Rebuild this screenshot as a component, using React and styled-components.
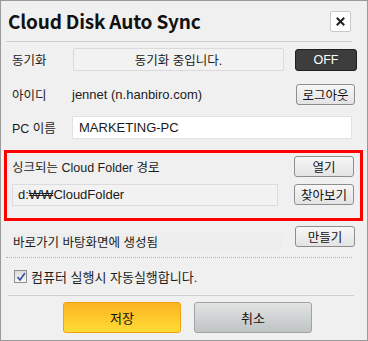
import React from "react";
import styled, { createGlobalStyle } from "styled-components";

const Global = createGlobalStyle`
  html, body { margin: 0; padding: 0; background: #f0f0f0; }
  * { box-sizing: border-box; }
`;

const FONT = `"Liberation Sans", "Noto Sans CJK KR", sans-serif`;

const Dialog = styled.div`
  width: 368px;
  height: 341px;
  border: 1px solid #9a9a9a;
  background: #f0f0f0;
  font-family: ${FONT};
  font-size: 12px;
  color: #1c1c1c;
  display: flex;
  flex-direction: column;
`;

const Header = styled.div`
  height: 40px;
  display: flex;
  align-items: center;
  padding: 0 16px 0 7px;
  justify-content: space-between;
`;

const Title = styled.h1`
  margin: 0;
  font-family: "Noto Sans CJK KR", "Liberation Sans", sans-serif;
  font-size: 19px;
  font-weight: 700;
  color: #111;
  letter-spacing: -0.2px;
  margin-top: -1px;
`;

const CloseBtn = styled.button`
  width: 21px;
  height: 21px;
  padding: 0;
  border: 1px solid #c8c8c8;
  border-radius: 2px;
  background: #fff;
  display: flex;
  align-items: center;
  justify-content: center;
`;

const Rule = styled.div`
  margin: ${(p) => p.$m || "0 15px 0 5px"};
  border-top: 1px ${(p) => (p.$dotted ? "dotted #b4b4b4" : "solid #cfcfcf")};
`;

const Row = styled.div`
  display: flex;
  align-items: ${(p) => p.$align || "center"};
  height: ${(p) => p.$h}px;
  margin-top: ${(p) => p.$mt}px;
  padding: 0 ${(p) => p.$pr}px 0 11px;
`;

const Label = styled.span`
  width: ${(p) => p.$w || 61}px;
  flex: none;
  font-size: 12.5px;
  white-space: nowrap;
`;

const Text = styled.span`
  flex: 1;
  font-size: 13px;
  color: #222;
`;

const StatusBox = styled.div`
  width: 211px;
  height: 23px;
  border: 1px solid #dadada;
  border-radius: 2px;
  background: #f2f2f2;
  display: flex;
  align-items: center;
  justify-content: center;
  font-size: 12.5px;
  color: #1a1a1a;
`;

const DarkBtn = styled.button`
  margin-left: auto;
  width: 62px;
  height: 22px;
  border: 1px solid #1e1e1e;
  border-radius: 3px;
  background: #3d3d3d;
  color: #fff;
  font-family: ${FONT};
  font-size: 12.5px;
  padding: 0;
`;

const GrayBtn = styled.button`
  margin-left: auto;
  width: ${(p) => p.$w || 60}px;
  height: 21px;
  flex: none;
  border: 1px solid #8e8e8e;
  border-radius: 3px;
  background: linear-gradient(#f7f7f7, #e3e3e3);
  color: #111;
  font-family: ${FONT};
  font-size: 12.5px;
  padding: 0;
`;

const Field = styled.div`
  width: ${(p) => p.$w}px;
  height: ${(p) => p.$h || 23}px;
  flex: none;
  border: 1px solid ${(p) => (p.$ro ? "#dcdcdc" : "#e2e2e2")};
  background: ${(p) => (p.$ro ? "#f2f2f2" : "#ffffff")};
  display: flex;
  align-items: center;
  padding-left: ${(p) => p.$pl || 6}px;
  font-size: 13px;
  color: #1a1a1a;
`;

const Highlight = styled.div`
  margin: 11px 0 0 3px;
  width: 359px;
  height: 71px;
  border: 3px solid #ff0000;
  padding: 3px 6px 0 5px;
  display: flex;
  flex-direction: column;
`;

const InnerRow = styled.div`
  display: flex;
  align-items: center;
  height: ${(p) => p.$h}px;
  margin-top: ${(p) => p.$mt || 0}px;
`;

const ShortcutLabel = styled.div`
  width: 270px;
  height: 17px;
  margin-top: 7px;
  background: #eeeeee;
  display: flex;
  align-items: center;
  font-size: 12.5px;
  padding-left: 1px;
`;

const CheckRow = styled.label`
  display: flex;
  align-items: center;
  gap: 4px;
  height: 13px;
  margin: 12px 0 0 13px;
  font-size: 13px;
`;

const Box = styled.span`
  width: 13px;
  height: 13px;
  border: 1px solid #8f8f8f;
  background: linear-gradient(#dcdcdc, #f6f6f6);
  display: flex;
  align-items: center;
  justify-content: center;
`;

const Footer = styled.div`
  display: flex;
  gap: 13px;
  margin: 6px 0 0 62px;
`;

const BigBtn = styled.button`
  width: 118px;
  height: 31px;
  border-radius: 3px;
  font-family: ${FONT};
  font-size: 13px;
  color: #111;
  padding: 0;
  border: 1px solid ${(p) => (p.$primary ? "#eea20c" : "#a0a4a4")};
  background: ${(p) =>
    p.$primary
      ? "linear-gradient(#fbb423, #ffdc33)"
      : "linear-gradient(#e2e4e4, #bfc3c3)"};
`;

export default function App() {
  return (
    <>
      <Global />
      <Dialog>
        <Header>
          <Title>Cloud Disk Auto Sync</Title>
          <CloseBtn aria-label="close">
            <svg width="9" height="9" viewBox="0 0 9 9">
              <path d="M1.5 1.5 L7.5 7.5 M7.5 1.5 L1.5 7.5" stroke="#222" strokeWidth="2" strokeLinecap="square" />
            </svg>
          </CloseBtn>
        </Header>
        <Rule />
        <Row $h={23} $mt={6} $pr={10}>
          <Label>동기화</Label>
          <StatusBox>동기화 중입니다.</StatusBox>
          <DarkBtn>OFF</DarkBtn>
        </Row>
        <Row $h={21} $mt={13} $pr={12}>
          <Label $w={60}>아이디</Label>
          <Text>jennet (n.hanbiro.com)</Text>
          <GrayBtn $w={59}>로그아웃</GrayBtn>
        </Row>
        <Row $h={23} $mt={11} $pr={14}>
          <Label $w={60}>PC 이름</Label>
          <Field $w={280} $h={23}>MARKETING-PC</Field>
        </Row>
        <Highlight>
          <InnerRow $h={21}>
            <Label $w={200}>싱크되는 Cloud Folder 경로</Label>
            <GrayBtn>열기</GrayBtn>
          </InnerRow>
          <InnerRow $h={23} $mt={6}>
            <Field $ro $w={266} $h={22} $pl={5}>d:₩₩CloudFolder</Field>
            <GrayBtn>찾아보기</GrayBtn>
          </InnerRow>
        </Highlight>
        <Row $h={24} $mt={5} $pr={12} $align="flex-start">
          <ShortcutLabel>바로가기 바탕화면에 생성됨</ShortcutLabel>
          <GrayBtn>만들기</GrayBtn>
        </Row>
        <Rule $dotted $m="7px 15px 0 5px" />
        <CheckRow>
          <Box>
            <svg width="10" height="10" viewBox="0 0 10 10">
              <path d="M1.5 5 L4 8 L8.8 1.2" fill="none" stroke="#2f4fa8" strokeWidth="1.6" />
            </svg>
          </Box>
          컴퓨터 실행시 자동실행합니다.
        </CheckRow>
        <Rule $m="12px 13px 0 7px" />
        <Footer>
          <BigBtn $primary>저장</BigBtn>
          <BigBtn>취소</BigBtn>
        </Footer>
      </Dialog>
    </>
  );
}
